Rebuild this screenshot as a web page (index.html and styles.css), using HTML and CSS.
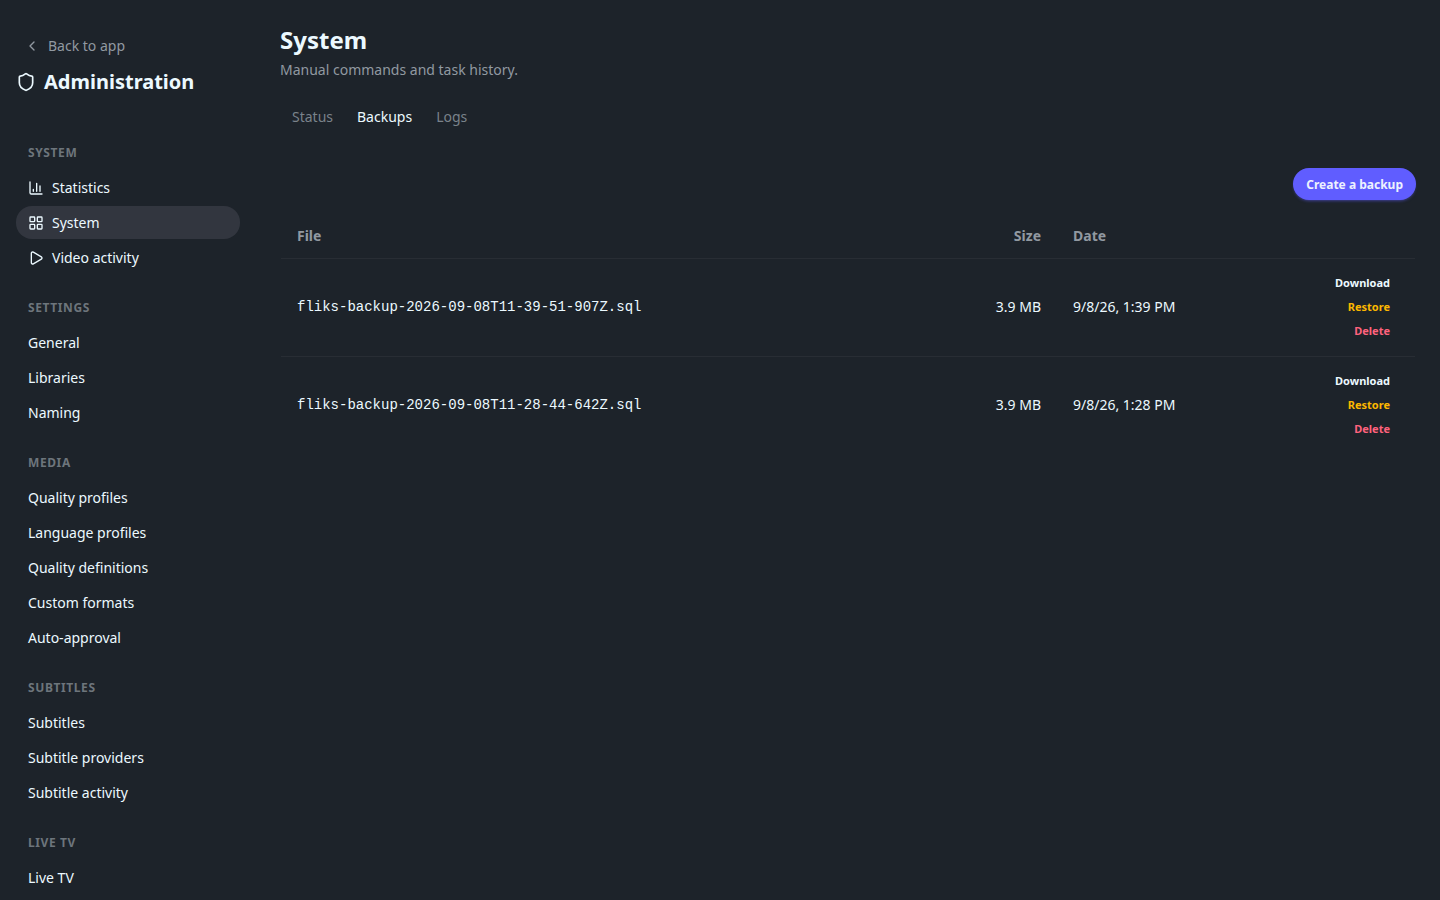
FILE: index.html
```html
<!DOCTYPE html>
<html lang="en">

<head>
    <meta charset="UTF-8">
    <meta name="viewport" content="width=device-width, initial-scale=1.0">
    <title>System - Administration</title>
    <link rel="stylesheet" href="styles.css">
</head>

<body>
    <div class="layout">
        <aside class="sidebar">
            <a class="back" href="#">
                <svg class="icon" viewBox="0 0 24 24"><path d="m15 18-6-6 6-6" /></svg>
                Back to app
            </a>
            <div class="brand">
                <svg class="icon icon-lg" viewBox="0 0 24 24"><path d="M20 13c0 5-3.5 7.5-7.66 8.95a1 1 0 0 1-.67-.01C7.5 20.5 4 18 4 13V6a1 1 0 0 1 1-1c2 0 4.5-1.2 6.24-2.72a1.17 1.17 0 0 1 1.52 0C14.51 3.81 17 5 19 5a1 1 0 0 1 1 1z" /></svg>
                Administration
            </div>
            <nav class="menu">
                <h2 class="menu-title">System</h2>
                <ul>
                    <li><a href="#">
                        <svg class="icon" viewBox="0 0 24 24"><path d="M3 3v16a2 2 0 0 0 2 2h16M8 17v-3M13 17V5M18 17V9" /></svg>
                        Statistics</a></li>
                    <li><a class="active" href="#">
                        <svg class="icon" viewBox="0 0 24 24"><rect x="3" y="3" width="7" height="7" rx="1" /><rect x="14" y="3" width="7" height="7" rx="1" /><rect x="14" y="14" width="7" height="7" rx="1" /><rect x="3" y="14" width="7" height="7" rx="1" /></svg>
                        System</a></li>
                    <li><a href="#">
                        <svg class="icon" viewBox="0 0 24 24"><path d="M5 5a2 2 0 0 1 3.008-1.728l11.997 6.998a2 2 0 0 1 .003 3.458l-12 7A2 2 0 0 1 5 19z" /></svg>
                        Video activity</a></li>
                </ul>
                <h2 class="menu-title">Settings</h2>
                <ul>
                    <li><a href="#">General</a></li>
                    <li><a href="#">Libraries</a></li>
                    <li><a href="#">Naming</a></li>
                </ul>
                <h2 class="menu-title">Media</h2>
                <ul>
                    <li><a href="#">Quality profiles</a></li>
                    <li><a href="#">Language profiles</a></li>
                    <li><a href="#">Quality definitions</a></li>
                    <li><a href="#">Custom formats</a></li>
                    <li><a href="#">Auto-approval</a></li>
                </ul>
                <h2 class="menu-title">Subtitles</h2>
                <ul>
                    <li><a href="#">Subtitles</a></li>
                    <li><a href="#">Subtitle providers</a></li>
                    <li><a href="#">Subtitle activity</a></li>
                </ul>
                <h2 class="menu-title">Live TV</h2>
                <ul>
                    <li><a href="#">Live TV</a></li>
                </ul>
            </nav>
        </aside>

        <main class="content">
            <header>
                <h1>System</h1>
                <p class="subtitle">Manual commands and task history.</p>
            </header>
            <nav class="tabs">
                <a href="#">Status</a>
                <a class="active" href="#">Backups</a>
                <a href="#">Logs</a>
            </nav>
            <div class="toolbar">
                <button class="btn-primary" type="button">Create a backup</button>
            </div>
            <div class="table-wrapper">
                <table>
                    <thead>
                        <tr>
                            <th>File</th>
                            <th class="size">Size</th>
                            <th class="date">Date</th>
                            <th class="actions-col"></th>
                        </tr>
                    </thead>
                    <tbody>
                        <tr>
                            <td class="file">fliks-backup-2026-09-08T11-39-51-907Z.sql</td>
                            <td class="size">3.9 MB</td>
                            <td>9/8/26, 1:39 PM</td>
                            <td>
                                <div class="actions">
                                    <a class="btn-xs" href="#">Download</a>
                                    <button class="btn-xs warning" type="button">Restore</button>
                                    <button class="btn-xs error" type="button">Delete</button>
                                </div>
                            </td>
                        </tr>
                        <tr>
                            <td class="file">fliks-backup-2026-09-08T11-28-44-642Z.sql</td>
                            <td class="size">3.9 MB</td>
                            <td>9/8/26, 1:28 PM</td>
                            <td>
                                <div class="actions">
                                    <a class="btn-xs" href="#">Download</a>
                                    <button class="btn-xs warning" type="button">Restore</button>
                                    <button class="btn-xs error" type="button">Delete</button>
                                </div>
                            </td>
                        </tr>
                    </tbody>
                </table>
            </div>
        </main>
    </div>
</body>

</html>
```
FILE: styles.css
```css
* {
    box-sizing: border-box;
    margin: 0;
    padding: 0;
}

body {
    background-color: #1d232a;
    color: #ecf9ff;
    font-family: "Noto Sans", sans-serif;
    font-size: 14px;
    line-height: 20px;
}

a {
    color: inherit;
    text-decoration: none;
}

ul {
    list-style: none;
}

.layout {
    display: flex;
    height: 100vh;
}

.icon {
    width: 16px;
    height: 16px;
    flex-shrink: 0;
    fill: none;
    stroke: currentColor;
    stroke-width: 2;
    stroke-linecap: round;
    stroke-linejoin: round;
}

.icon-lg {
    width: 20px;
    height: 20px;
}

/* sidebar */
.sidebar {
    width: 256px;
    flex-shrink: 0;
    padding: 30px 16px 0;
    overflow: hidden;
}

.back {
    display: flex;
    align-items: center;
    gap: 8px;
    height: 32px;
    padding: 0 8px;
    color: #9199a1;
}

.brand {
    display: flex;
    align-items: center;
    gap: 8px;
    margin-top: 6px;
    font-size: 20px;
    font-weight: 700;
    line-height: 28px;
}

.menu {
    margin-top: 32px;
}

.menu-title {
    padding: 16px 12px 9px;
    color: #6d757c;
    font-size: 12px;
    font-weight: 700;
    line-height: 18px;
    letter-spacing: 0.05em;
    text-transform: uppercase;
}

.menu ul {
    display: flex;
    flex-direction: column;
    gap: 2px;
    margin-bottom: 9px;
}

.menu a {
    display: flex;
    align-items: center;
    gap: 8px;
    padding: 6px 12px;
    border-radius: 16px;
    line-height: 21px;
}

.menu a.active {
    background-color: #32363f;
}

/* main */
.content {
    flex: 1;
    min-width: 0;
    padding: 24px;
}

h1 {
    font-size: 24px;
    font-weight: 700;
    line-height: 32px;
}

.subtitle {
    margin-top: 4px;
    color: #9199a1;
}

.tabs {
    display: flex;
    margin-top: 17px;
}

.tabs a {
    padding: 0 12px;
    color: #7a828a;
    line-height: 40px;
}

.tabs a.active {
    color: #ecf9ff;
}

.toolbar {
    display: flex;
    justify-content: flex-end;
    margin: 31px 0 16px;
}

button {
    border: none;
    background: none;
    font-family: inherit;
    cursor: pointer;
}

.btn-primary {
    height: 32px;
    padding: 0 13px;
    border-radius: 16px;
    background-color: #605dff;
    color: #edf1fe;
    font-size: 12px;
    font-weight: 700;
    box-shadow: 0 2px 3px -1px #605dff80;
}

.table-wrapper {
    padding: 0 1px;
    overflow-x: auto;
}

table {
    width: 100%;
    border-collapse: collapse;
}

th,
td {
    padding: 12px 16px 13px;
    text-align: left;
    vertical-align: middle;
}

th {
    padding: 10px 16px 12px;
    color: #9199a1;
    font-weight: 700;
}

tr {
    border-bottom: 1px solid #282d34;
}

tbody tr:last-child {
    border-bottom: none;
}

.file {
    font-family: "Liberation Mono", monospace;
}

th.size,
td.size {
    width: 96px;
    text-align: right;
    white-space: nowrap;
}

.date {
    width: 212px;
}

.actions-col {
    width: 146px;
}

.actions {
    display: flex;
    flex-direction: column;
    align-items: flex-end;
}

.btn-xs {
    height: 24px;
    padding: 0 9px;
    font-size: 11px;
    font-weight: 700;
    line-height: 24px;
}

.warning {
    color: #fcb700;
}

.error {
    color: #ff627d;
}
```
